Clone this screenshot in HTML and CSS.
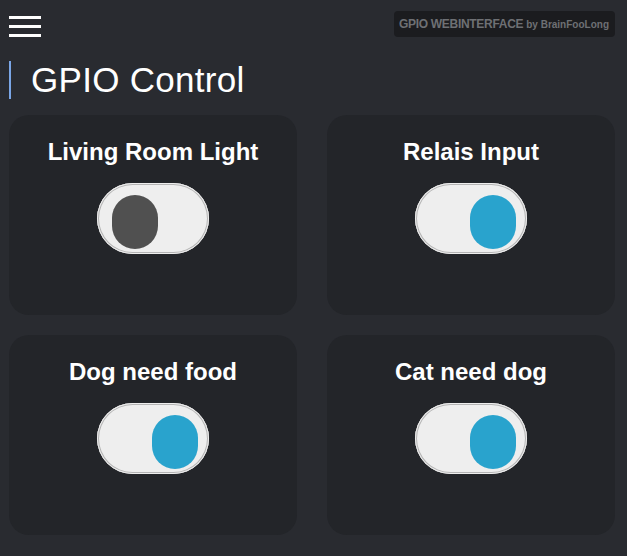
FILE: index.html
```html
<!DOCTYPE html>
<html lang="en">
<head>
<meta charset="utf-8">
<title>GPIO Control</title>
<link rel="stylesheet" href="styles.css">
</head>
<body>
<header class="topbar">
  <button class="menu" aria-label="Menu">
    <span class="menu-line"></span>
    <span class="menu-line"></span>
    <span class="menu-line"></span>
  </button>
  <div class="brand"><span class="brand-main">GPIO WEBINTERFACE</span> <span class="brand-by">by BrainFooLong</span></div>
</header>
<h1 class="page-title">GPIO Control</h1>
<main class="grid">
  <section class="card">
    <h2 class="card-title">Living Room Light</h2>
    <div class="toggle"><span class="knob"></span></div>
  </section>
  <section class="card">
    <h2 class="card-title">Relais Input</h2>
    <div class="toggle on"><span class="knob"></span></div>
  </section>
  <section class="card">
    <h2 class="card-title">Dog need food</h2>
    <div class="toggle on"><span class="knob"></span></div>
  </section>
  <section class="card">
    <h2 class="card-title">Cat need dog</h2>
    <div class="toggle on"><span class="knob"></span></div>
  </section>
</main>
</body>
</html>
```
FILE: styles.css
```css
html {
  background: #292b30;
}
body {
  margin: 0;
  padding: 11px 12px 0 9px;
  font-family: "Liberation Sans", Arial, sans-serif;
  color: #ffffff;
  background: #292b30;
}
.topbar {
  display: flex;
  justify-content: space-between;
  align-items: flex-start;
  height: 26px;
}
.menu {
  display: flex;
  flex-direction: column;
  gap: 6px;
  margin: 5px 0 0 0;
  padding: 0;
  border: 0;
  background: none;
  width: 32px;
}
.menu-line {
  display: block;
  width: 32px;
  height: 3px;
  background: #ffffff;
}
.brand {
  height: 26px;
  box-sizing: border-box;
  padding: 0 6px 0 5px;
  display: flex;
  align-items: center;
  gap: 3px;
  background: #1b1c1f;
  border-radius: 4px;
  color: #6e7074;
  font-weight: bold;
  white-space: nowrap;
}
.brand-main {
  font-size: 12px;
  letter-spacing: -0.3px;
}
.brand-by {
  font-size: 10px;
}
.page-title {
  margin: 24px 0 16px 0;
  height: 38px;
  line-height: 38px;
  border-left: 2px solid #7aa6e6;
  padding-left: 20px;
  font-size: 35px;
  font-weight: normal;
  letter-spacing: 0.3px;
}
.grid {
  display: grid;
  grid-template-columns: 288px 288px;
  grid-template-rows: 200px 200px;
  column-gap: 30px;
  row-gap: 20px;
}
.card {
  background: #232529;
  border-radius: 20px;
  padding-top: 23px;
  display: flex;
  flex-direction: column;
  align-items: center;
}
.card-title {
  margin: 0 0 17px 0;
  font-size: 24px;
  line-height: 28px;
  font-weight: bold;
}
.toggle {
  width: 112px;
  height: 71px;
  box-sizing: border-box;
  border-radius: 36px;
  background: #eeeeee;
  box-shadow: inset 0 0 0 1px #eeeeee, inset 0 0 0 2px #b4b4b4;
  padding: 12px 0 0 15px;
}
.toggle.on {
  padding-left: 55px;
}
.knob {
  display: block;
  width: 46px;
  height: 54px;
  border-radius: 23px;
  background: #505050;
}
.toggle.on .knob {
  background: #29a3cd;
}
```
